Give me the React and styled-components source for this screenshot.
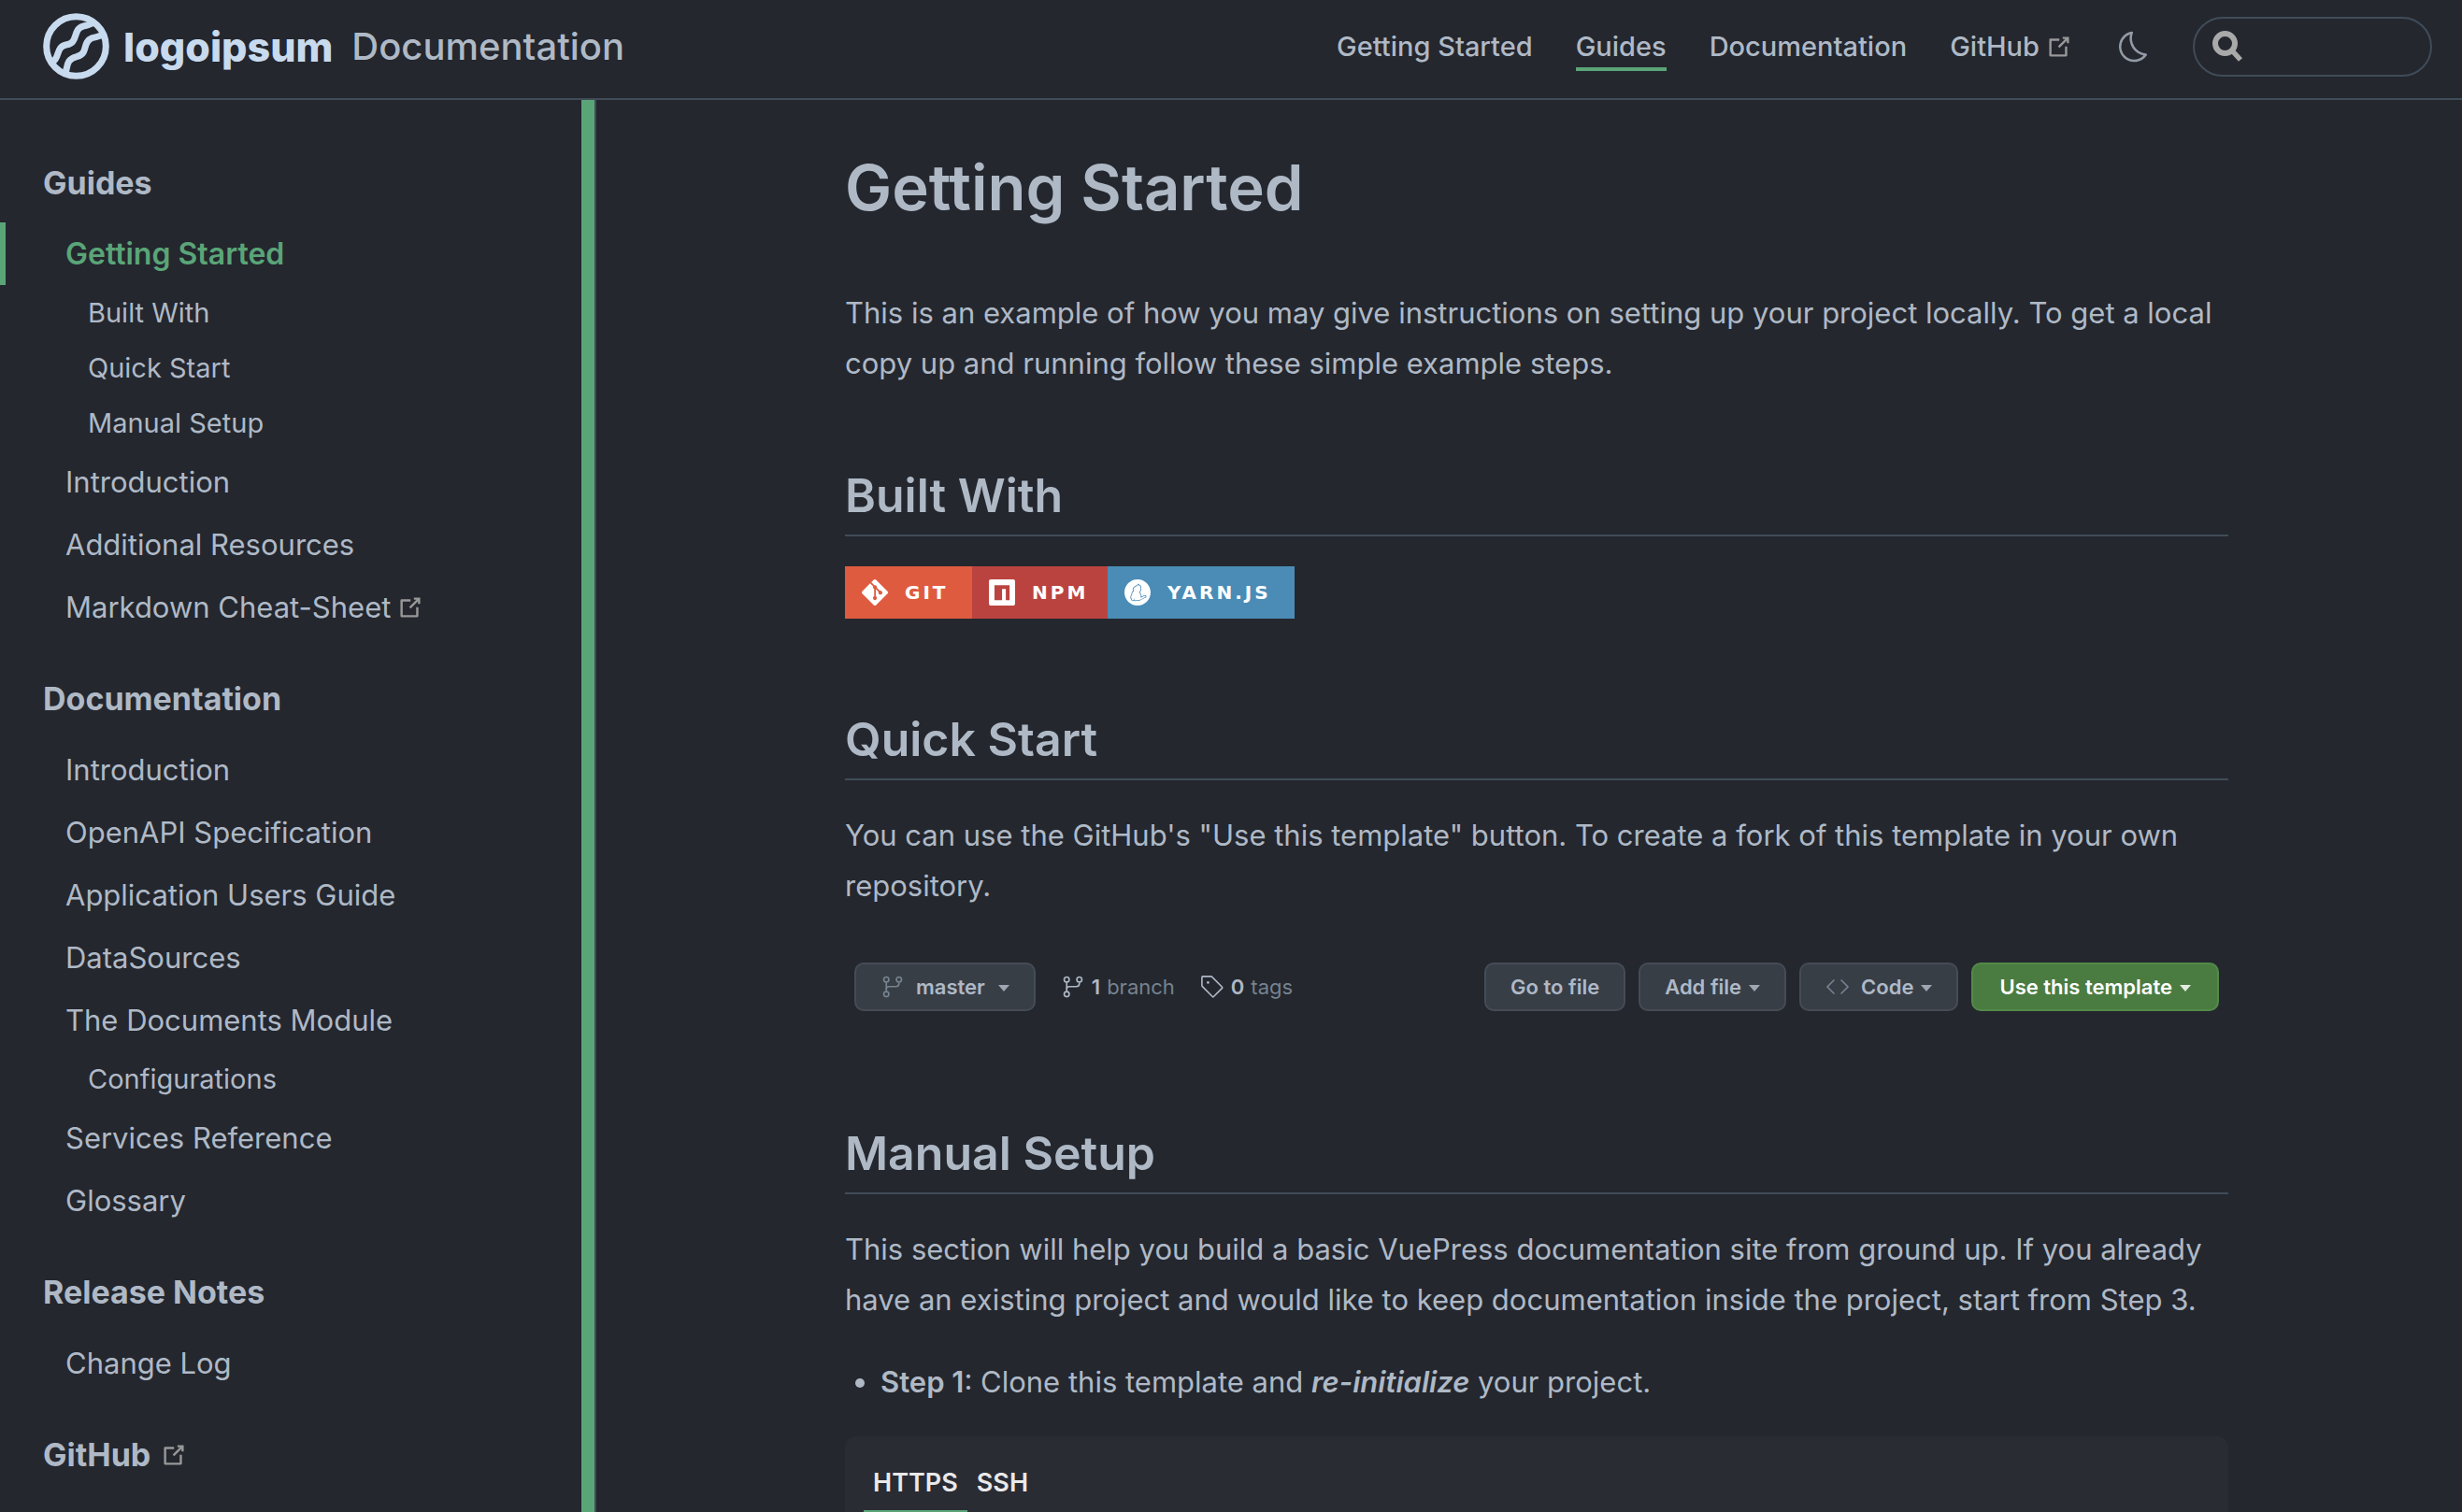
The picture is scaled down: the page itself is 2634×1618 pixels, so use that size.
import React from 'react';
import styled, { createGlobalStyle, css } from 'styled-components';
import { SiGit, SiNpm, SiYarn } from 'react-icons/si';
import { GoCode, GoGitBranch, GoTag } from 'react-icons/go';

const color = {
  bg: '#24272e',
  panel: '#2a2c34',
  text: '#afb9c6',
  muted: '#768390',
  border: '#404c58',
  accent: '#5aa578',
  icon: '#989898',
  logo: '#c8daee',
  button: '#383e46',
  buttonBorder: '#454c56',
  green: '#4a7c41',
};

const GlobalStyle = createGlobalStyle`
  *, *::before, *::after { box-sizing: border-box; }
  body {
    margin: 0;
    background: ${color.bg};
    color: ${color.text};
    font-family: Inter, "Noto Sans", sans-serif;
    font-size: 31px;
    -webkit-font-smoothing: antialiased;
  }
  a { color: inherit; text-decoration: none; }
  button { font: inherit; cursor: pointer; }
  svg { display: block; flex: none; }
`;

const Page = styled.div`
  display: grid;
  grid-template-rows: auto minmax(0, 1fr);
  height: 100vh;
`;

const Navbar = styled.header`
  display: flex;
  align-items: center;
  justify-content: space-between;
  height: 107px;
  padding: 0 32px 6px 46px;
  border-bottom: 2px solid ${color.border};
`;

const Brand = styled.a`
  display: flex;
  align-items: center;
`;

const Wordmark = styled.span`
  margin: 0 20px 0 15px;
  font-size: 43px;
  font-weight: 800;
  color: ${color.logo};
`;

const SiteName = styled.span`
  font-size: 40px;
  font-weight: 500;
`;

const NavTools = styled.div`
  display: flex;
  align-items: center;
  gap: 44px;
`;

const NavLinks = styled.nav`
  display: flex;
  gap: 46px;
`;

const NavLink = styled.a`
  display: flex;
  align-items: center;
  gap: 6px;
  border: 0 solid transparent;
  border-width: 4px 0;
  border-bottom-color: ${(p) => (p.$active ? color.accent : 'transparent')};
  font-size: 29px;
  font-weight: 500;
  line-height: 45px;
`;

const ThemeToggle = styled.button`
  display: flex;
  padding: 0;
  border: 0;
  background: none;
  color: ${color.text};
  opacity: 0.8;
`;

const Search = styled.label`
  display: flex;
  align-items: center;
  gap: 12px;
  width: 256px;
  height: 64px;
  padding: 0 19px;
  border: 2px solid ${color.border};
  border-radius: 32px;
`;

const SearchInput = styled.input`
  flex: 1;
  min-width: 0;
  padding: 0;
  border: 0;
  outline: 0;
  background: none;
  color: inherit;
  font: inherit;
`;

const Body = styled.div`
  display: flex;
  min-height: 0;
`;

const Sidebar = styled.aside`
  display: flex;
  flex: 0 0 638px;
  border-right: 2px solid ${color.border};
`;

const SidebarScroll = styled.nav`
  flex: 1;
  padding: 64px 0;
  overflow-y: auto;
  scrollbar-width: none;
`;

const SidebarThumb = styled.div`
  width: 14px;
  background: ${color.accent};
`;

const Group = styled.section`
  & + & { margin-top: 40px; }
`;

const GroupTitle = styled.h4`
  display: flex;
  align-items: center;
  gap: 10px;
  margin: 0 0 17px;
  padding-left: 46px;
  font-size: 34px;
  font-weight: 700;
  line-height: 50px;
`;

const itemLevels = {
  1: css`
    padding: 11px 0 11px 64px;
    font-size: 31px;
    line-height: 45px;
  `,
  2: css`
    padding: 8px 0 8px 88px;
    font-size: 29px;
    line-height: 43px;
  `,
};

const SidebarLink = styled.a`
  display: flex;
  align-items: center;
  gap: 6px;
  border-left: 6px solid transparent;
  ${(p) => itemLevels[p.$level]}
  ${(p) =>
    p.$active &&
    css`
      border-left-color: ${color.accent};
      color: ${color.accent};
      font-size: 32px;
      font-weight: 600;
    `}
`;

const Main = styled.main`
  flex: 1;
  min-width: 0;
  padding: 52px 0 0 16px;
  overflow-y: auto;
  scrollbar-width: none;
`;

const Article = styled.article`
  max-width: 1480px;
  margin: 0 auto;
`;

const Title = styled.h1`
  margin: 0 0 65px;
  font-size: 67px;
  font-weight: 600;
  line-height: 84px;
`;

const Section = styled.section`
  margin-top: ${(p) => p.$gap}px;
`;

const Heading = styled.h2`
  margin: 0 0 32px;
  padding-bottom: 10px;
  border-bottom: 2px solid ${color.border};
  font-size: 50px;
  font-weight: 600;
  line-height: 64px;
`;

const Text = styled.p`
  margin: 0;
  line-height: 54px;
`;

const Steps = styled.ul`
  margin: 34px 0 31px;
  padding-left: 38px;
  line-height: 54px;
`;

const Strong = styled.strong`
  font-weight: 600;
`;

const Badges = styled.div`
  display: flex;
`;

const Badge = styled.a`
  display: flex;
  align-items: center;
  gap: 18px;
  width: ${(p) => p.$width}px;
  height: 56px;
  padding-left: 18px;
  background: ${(p) => p.$bg};
  color: #fff;
  font-family: Verdana, "DejaVu Sans", sans-serif;
  font-size: 20px;
  font-weight: 700;
  letter-spacing: 3px;
`;

const RepoBar = styled.div`
  display: flex;
  align-items: center;
  justify-content: space-between;
  margin-top: 55px;
  padding: 0 10px;
  font-size: 22px;
`;

const RepoInfo = styled.div`
  display: flex;
  align-items: center;
  gap: 27px;
`;

const RepoActions = styled.div`
  display: flex;
  gap: 14px;
`;

const RepoButton = styled.button`
  display: flex;
  align-items: center;
  gap: 8px;
  height: 52px;
  padding: 0 ${(p) => (p.$primary ? 28 : 26)}px;
  border: 2px solid ${(p) => (p.$primary ? '#538a4a' : color.buttonBorder)};
  border-radius: 10px;
  background: ${(p) => (p.$primary ? color.green : color.button)};
  color: ${(p) => (p.$primary ? '#fff' : color.text)};
  font-weight: 600;
`;

const ButtonIcon = styled.span`
  margin-right: 4px;
  color: ${color.muted};
`;

const Caret = styled.span`
  margin: 2px 0 0 ${(p) => (p.$wide ? 6 : 0)}px;
  border: 6px solid transparent;
  border-top: 7px solid currentColor;
  border-bottom: 0;
  opacity: 0.85;
`;

const RepoStat = styled.a`
  display: flex;
  align-items: center;
  gap: 7px;
`;

const Muted = styled.span`
  color: ${color.muted};
`;

const CodePanel = styled.div`
  min-height: 320px;
  padding: 20px;
  border-radius: 12px;
  background: ${color.panel};
`;

const Tabs = styled.div`
  display: flex;
`;

const Tab = styled.button`
  padding: 13px 10px 12px;
  border: 0;
  border-bottom: 4px solid ${(p) => (p.$active ? color.accent : 'transparent')};
  background: none;
  color: #e9e9ea;
  font-size: 27px;
  font-weight: 600;
  line-height: 34px;
`;

const ExternalIcon = () => (
  <svg width="30" height="30" viewBox="0 0 100 100" fill={color.icon} aria-hidden="true">
    <path d="M18.8,85.1h56l0,0c2.2,0,4-1.8,4-4v-32h-8v28h-48v-48h28v-8h-32l0,0c-2.2,0-4,1.8-4,4v56C14.8,83.3,16.6,85.1,18.8,85.1z" />
    <polygon points="45.7,48.7 51.3,54.3 77.2,28.5 77.2,37.2 85.2,37.2 85.2,14.9 62.8,14.9 62.8,22.9 71.5,22.9" />
  </svg>
);

const MoonIcon = () => (
  <svg width="40" height="40" viewBox="0 0 32 32" fill="currentColor" aria-hidden="true">
    <path d="M13.502 5.414a15.075 15.075 0 0 0 11.594 18.194a11.113 11.113 0 0 1-7.975 3.39c-.138 0-.278.005-.418 0a11.094 11.094 0 0 1-3.2-21.584M14.98 3a1.002 1.002 0 0 0-.175.016a13.096 13.096 0 0 0 1.825 25.981c.164.006.328 0 .49 0a13.072 13.072 0 0 0 10.703-5.555a1.01 1.01 0 0 0-.783-1.565A13.08 13.08 0 0 1 15.89 4.38A1.015 1.015 0 0 0 14.98 3z" />
  </svg>
);

const SearchIcon = () => (
  <svg width="33" height="33" viewBox="0 0 33 33" fill="none" stroke="#a9a9a9" aria-hidden="true">
    <circle cx="13.5" cy="13.5" r="10.5" strokeWidth="6" />
    <path d="M20 20L30 31" strokeWidth="5.5" />
  </svg>
);

const LogoMark = () => (
  <svg width="71" height="71" viewBox="18 27 212 212" fill="none" stroke={color.logo} aria-hidden="true">
    <circle cx="124" cy="133" r="95" strokeWidth="21" />
    <path
      d="M50 182C72 168 58 134 94 128C132 122 112 78 146 69C160 66 170 64 180 56"
      strokeWidth="21"
    />
    <path
      d="M90 218C97 196 92 174 126 166C164 158 142 120 174 107C188 102 198 104 212 94"
      strokeWidth="21"
    />
  </svg>
);

const navLinks = [
  { label: 'Getting Started' },
  { label: 'Guides', active: true },
  { label: 'Documentation' },
  { label: 'GitHub', external: true },
];

const groups = [
  {
    title: 'Guides',
    items: [
      { label: 'Getting Started', active: true },
      { label: 'Built With', level: 2 },
      { label: 'Quick Start', level: 2 },
      { label: 'Manual Setup', level: 2 },
      { label: 'Introduction' },
      { label: 'Additional Resources' },
      { label: 'Markdown Cheat-Sheet', external: true },
    ],
  },
  {
    title: 'Documentation',
    items: [
      { label: 'Introduction' },
      { label: 'OpenAPI Specification' },
      { label: 'Application Users Guide' },
      { label: 'DataSources' },
      { label: 'The Documents Module' },
      { label: 'Configurations', level: 2 },
      { label: 'Services Reference' },
      { label: 'Glossary' },
    ],
  },
  { title: 'Release Notes', items: [{ label: 'Change Log' }] },
  { title: 'GitHub', external: true, items: [] },
];

const badges = [
  { label: 'GIT', bg: '#df5b40', width: 136, Icon: SiGit },
  { label: 'NPM', bg: '#bb433f', width: 145, Icon: SiNpm },
  { label: 'YARN.JS', bg: '#4a8cb6', width: 200, Icon: SiYarn },
];

export default function App() {
  return (
    <Page>
      <GlobalStyle />
      <Navbar>
        <Brand href="#home">
          <LogoMark />
          <Wordmark>logoipsum</Wordmark>
          <SiteName>Documentation</SiteName>
        </Brand>
        <NavTools>
          <NavLinks>
            {navLinks.map((link) => (
              <NavLink key={link.label} href="#nav" $active={link.active}>
                {link.label}
                {link.external && <ExternalIcon />}
              </NavLink>
            ))}
          </NavLinks>
          <ThemeToggle type="button" aria-label="Toggle dark mode">
            <MoonIcon />
          </ThemeToggle>
          <Search>
            <SearchIcon />
            <SearchInput type="search" aria-label="Search" />
          </Search>
        </NavTools>
      </Navbar>

      <Body>
        <Sidebar>
          <SidebarScroll>
            {groups.map((group) => (
              <Group key={group.title}>
                <GroupTitle>
                  {group.external ? <a href="#github">{group.title}</a> : group.title}
                  {group.external && <ExternalIcon />}
                </GroupTitle>
                {group.items.map((item) => (
                  <SidebarLink
                    key={item.label}
                    href="#page"
                    $level={item.level || 1}
                    $active={item.active}
                  >
                    {item.label}
                    {item.external && <ExternalIcon />}
                  </SidebarLink>
                ))}
              </Group>
            ))}
          </SidebarScroll>
          <SidebarThumb />
        </Sidebar>

        <Main>
          <Article>
            <Title>Getting Started</Title>
            <Text>
              This is an example of how you may give instructions on setting up your project
              locally. To get a local copy up and running follow these simple example steps.
            </Text>

            <Section $gap={82}>
              <Heading>Built With</Heading>
              <Badges>
                {badges.map(({ label, bg, width, Icon }) => (
                  <Badge key={label} href="#badge" $bg={bg} $width={width}>
                    <Icon size={28} aria-hidden="true" />
                    {label}
                  </Badge>
                ))}
              </Badges>
            </Section>

            <Section $gap={97}>
              <Heading>Quick Start</Heading>
              <Text>
                You can use the GitHub's "Use this template" button. To create a fork of this
                template in your own repository.
              </Text>
              <RepoBar>
                <RepoInfo>
                  <RepoButton type="button">
                    <ButtonIcon>
                      <GoGitBranch size={26} />
                    </ButtonIcon>
                    master
                    <Caret $wide />
                  </RepoButton>
                  <RepoStat href="#branches">
                    <GoGitBranch size={26} />
                    <Strong>1</Strong>
                    <Muted>branch</Muted>
                  </RepoStat>
                  <RepoStat href="#tags">
                    <GoTag size={26} />
                    <Strong>0</Strong>
                    <Muted>tags</Muted>
                  </RepoStat>
                </RepoInfo>
                <RepoActions>
                  <RepoButton type="button">Go to file</RepoButton>
                  <RepoButton type="button">
                    Add file
                    <Caret />
                  </RepoButton>
                  <RepoButton type="button">
                    <ButtonIcon>
                      <GoCode size={26} />
                    </ButtonIcon>
                    Code
                    <Caret />
                  </RepoButton>
                  <RepoButton type="button" $primary>
                    Use this template
                    <Caret />
                  </RepoButton>
                </RepoActions>
              </RepoBar>
            </Section>

            <Section $gap={120}>
              <Heading>Manual Setup</Heading>
              <Text>
                This section will help you build a basic VuePress documentation site from ground
                up. If you already have an existing project and would like to keep documentation
                inside the project, start from Step 3.
              </Text>
              <Steps>
                <li>
                  <Strong>Step 1</Strong>: Clone this template and{' '}
                  <em>
                    <Strong>re-initialize</Strong>
                  </em>{' '}
                  your project.
                </li>
              </Steps>
              <CodePanel>
                <Tabs role="tablist">
                  <Tab type="button" role="tab" aria-selected="true" $active>
                    HTTPS
                  </Tab>
                  <Tab type="button" role="tab" aria-selected="false">
                    SSH
                  </Tab>
                </Tabs>
              </CodePanel>
            </Section>
          </Article>
        </Main>
      </Body>
    </Page>
  );
}
